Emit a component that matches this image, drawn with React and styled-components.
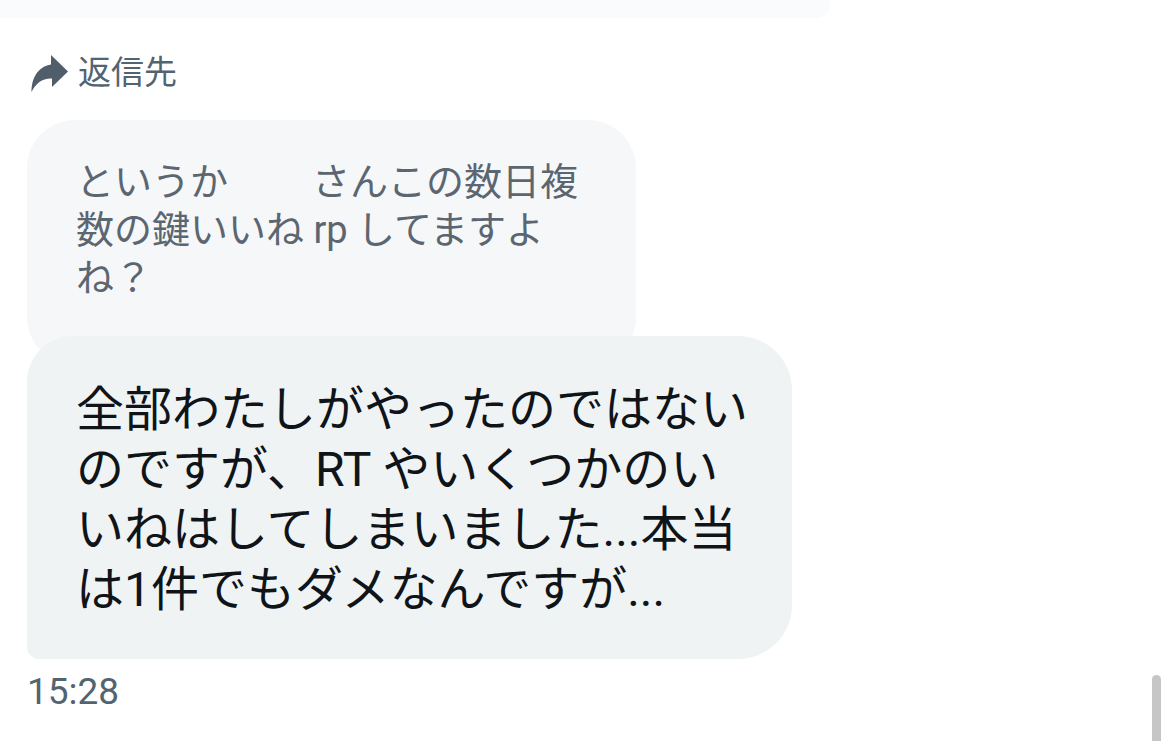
import React from "react";
import styled, { createGlobalStyle } from "styled-components";

const GlobalStyle = createGlobalStyle`
  html, body {
    margin: 0;
    padding: 0;
    background: #ffffff;
  }
  body {
    font-family: Roboto, "Noto Sans CJK JP", sans-serif;
    -webkit-font-smoothing: antialiased;
  }
`;

const ReplyArrow = () => (
  <svg width="38" height="38" viewBox="0 0 38 38">
    <path
      d="M21 1 L38 17.5 L22 33 L22 24.5 C12.5 24 6 29 1.5 38 C1.5 24 8 12.5 21 10.5 Z"
      fill="#505d6a"
    />
  </svg>
);

const App = () => {
  return (
    <Page>
      <GlobalStyle />
      <PrevBubbleEnd />
      <Thread>
        <ReplyHeader>
          <IconBox>
            <ReplyArrow />
          </IconBox>
          <ReplyLabel>返信先</ReplyLabel>
        </ReplyHeader>

        <QuotedBubble>
          <QuotedText>
            というか<Redacted />さんこの数日複
            <br />
            数の鍵いいね rp してますよ
            <br />
            ね？
          </QuotedText>
        </QuotedBubble>

        <MessageBubble>
          <Line>全部わたしがやったのではない</Line>
          <Line>のですが、RT やいくつかのい</Line>
          <Line>いねはしてしまいました...本当</Line>
          <Line>は1件でもダメなんですが...</Line>
        </MessageBubble>

        <Timestamp>15:28</Timestamp>
      </Thread>
      <ScrollThumb />
    </Page>
  );
};

export default App;

const Page = styled.div`
  position: relative;
  width: 1170px;
  height: 741px;
  overflow: hidden;
  background: #ffffff;
`;

const PrevBubbleEnd = styled.div`
  width: 830px;
  height: 18px;
  background: #fafbfc;
  border-bottom-right-radius: 14px;
`;

const Thread = styled.div`
  display: flex;
  flex-direction: column;
  align-items: flex-start;
  padding-left: 27px;
`;

const ReplyHeader = styled.div`
  display: flex;
  align-items: center;
  gap: 10px;
  margin-top: 35px;
  height: 40px;
`;

const IconBox = styled.div`
  display: flex;
  width: 38px;
  height: 38px;
  margin-left: 3px;
`;

const ReplyLabel = styled.span`
  font-size: 33px;
  line-height: 40px;
  color: #536471;
`;

const QuotedBubble = styled.div`
  box-sizing: border-box;
  width: 609px;
  height: 245px;
  margin-top: 27px;
  padding: 38px 40px 0 49px;
  background: #f6f7f9;
  border-radius: 48px;
`;

const QuotedText = styled.p`
  margin: 0;
  font-size: 38px;
  line-height: 48px;
  color: #5b6670;
  white-space: nowrap;
`;

const Redacted = styled.span`
  display: inline-block;
  width: 84px;
`;

const MessageBubble = styled.div`
  display: flex;
  flex-direction: column;
  box-sizing: border-box;
  width: 765px;
  margin-top: -29px;
  padding: 44px 40px 39px 49px;
  background: #eff3f4;
  border-radius: 46px 54px 54px 12px;
`;

const Line = styled.span`
  font-size: 48px;
  line-height: 60px;
  color: #0f1419;
  white-space: nowrap;
`;

const Timestamp = styled.div`
  margin-top: 13px;
  font-size: 37px;
  line-height: 40px;
  color: #536471;
`;

const ScrollThumb = styled.div`
  position: absolute;
  right: 9px;
  top: 675px;
  width: 9px;
  height: 80px;
  background: #c6c6c6;
  border-radius: 5px;
`;
